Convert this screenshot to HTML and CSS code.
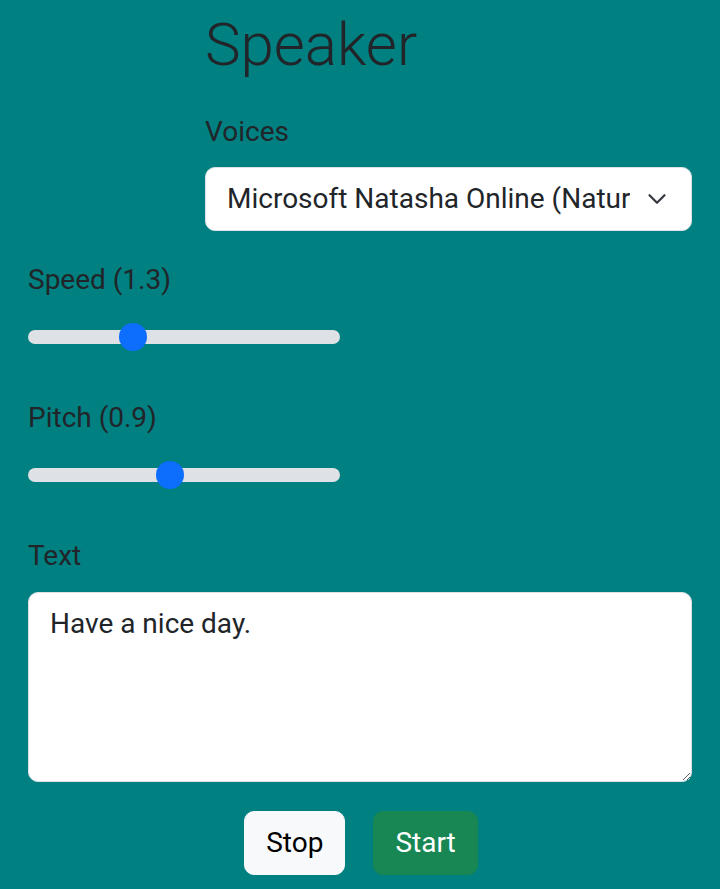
FILE: index.html
```html
<!DOCTYPE html>
<html lang="en">
<head>
<meta charset="utf-8">
<title>Speaker</title>
<link rel="stylesheet" href="styles.css">
</head>
<body>
<main class="page">
  <section class="voices">
    <h1 class="title">Speaker</h1>
    <label class="label">Voices</label>
    <div class="select">
      <span class="select-text">Microsoft Natasha Online (Natur</span>
      <svg class="chevron" viewBox="0 0 16 16" width="20" height="20" aria-hidden="true"><path d="m2 5 6 6 6-6" fill="none" stroke="#343a40" stroke-width="1.8" stroke-linecap="round" stroke-linejoin="round"/></svg>
    </div>
  </section>

  <div class="field">
    <label class="label">Speed (1.3)</label>
    <input class="range" type="range" min="0.5" max="3" step="0.1" value="1.3">
  </div>

  <div class="field">
    <label class="label">Pitch (0.9)</label>
    <input class="range" type="range" min="0" max="2" step="0.1" value="0.9">
  </div>

  <div class="field text-field">
    <label class="label">Text</label>
    <textarea class="textarea">Have a nice day.</textarea>
  </div>

  <div class="actions">
    <button class="btn btn-light" type="button">Stop</button>
    <button class="btn btn-success" type="button">Start</button>
  </div>
</main>
</body>
</html>
```

FILE: styles.css
```css
* {
  box-sizing: border-box;
}

html, body {
  margin: 0;
  padding: 0;
  background: #008080;
}

body {
  font-family: Roboto, "Liberation Sans", sans-serif;
  font-size: 28px;
  line-height: 42px;
  color: #212529;
}

.page {
  padding: 11px 28px 0;
  display: flex;
  flex-direction: column;
}

.voices {
  margin-left: 177px;
  margin-bottom: 28px;
  display: flex;
  flex-direction: column;
}

.title {
  margin: 0 0 32px;
  font-size: 60px;
  line-height: 68px;
  font-weight: 300;
  color: #212529;
}

.label {
  display: block;
  line-height: 42px;
  margin-bottom: 14px;
}

.select {
  height: 64px;
  background: #fff;
  border: 1px solid #dee2e6;
  border-radius: 10px;
  display: flex;
  align-items: center;
  padding: 0 24px 0 21px;
  gap: 17px;
}

.select-text {
  flex: 1;
  min-width: 0;
  overflow: hidden;
  white-space: nowrap;
  color: #212529;
}

.chevron {
  flex: none;
  display: block;
}

.field {
  margin-bottom: 39px;
  display: flex;
  flex-direction: column;
}

.field .label {
  margin-bottom: 15px;
}

.range {
  -webkit-appearance: none;
  appearance: none;
  display: block;
  width: 312px;
  height: 42px;
  margin: 0;
  padding: 0;
  background: transparent;
}

.range::-webkit-slider-runnable-track {
  height: 14px;
  background: #dee2e6;
  border-radius: 14px;
  border: 0;
}

.range::-webkit-slider-thumb {
  -webkit-appearance: none;
  appearance: none;
  width: 28px;
  height: 28px;
  margin-top: -7px;
  border: 0;
  border-radius: 50%;
  background: #0d6efd;
}

.text-field {
  margin-bottom: 29px;
}

.textarea {
  display: block;
  width: 100%;
  height: 190px;
  margin: 0;
  padding: 10px 21px;
  font-family: Roboto, "Liberation Sans", sans-serif;
  font-size: 28px;
  line-height: 42px;
  color: #212529;
  background: #fff;
  border: 1px solid #dee2e6;
  border-radius: 10px;
  resize: both;
  outline: none;
}

.actions {
  display: flex;
  justify-content: center;
  gap: 28px;
  padding-left: 2px;
}

.btn {
  font-family: Roboto, "Liberation Sans", sans-serif;
  font-size: 28px;
  line-height: 42px;
  padding: 10px 21px;
  border-radius: 10px;
  border: 1px solid transparent;
  cursor: pointer;
}

.btn-light {
  background: #f8f9fa;
  border-color: #f8f9fa;
  color: #000;
}

.btn-success {
  background: #198754;
  border-color: #198754;
  color: #fff;
}
```
